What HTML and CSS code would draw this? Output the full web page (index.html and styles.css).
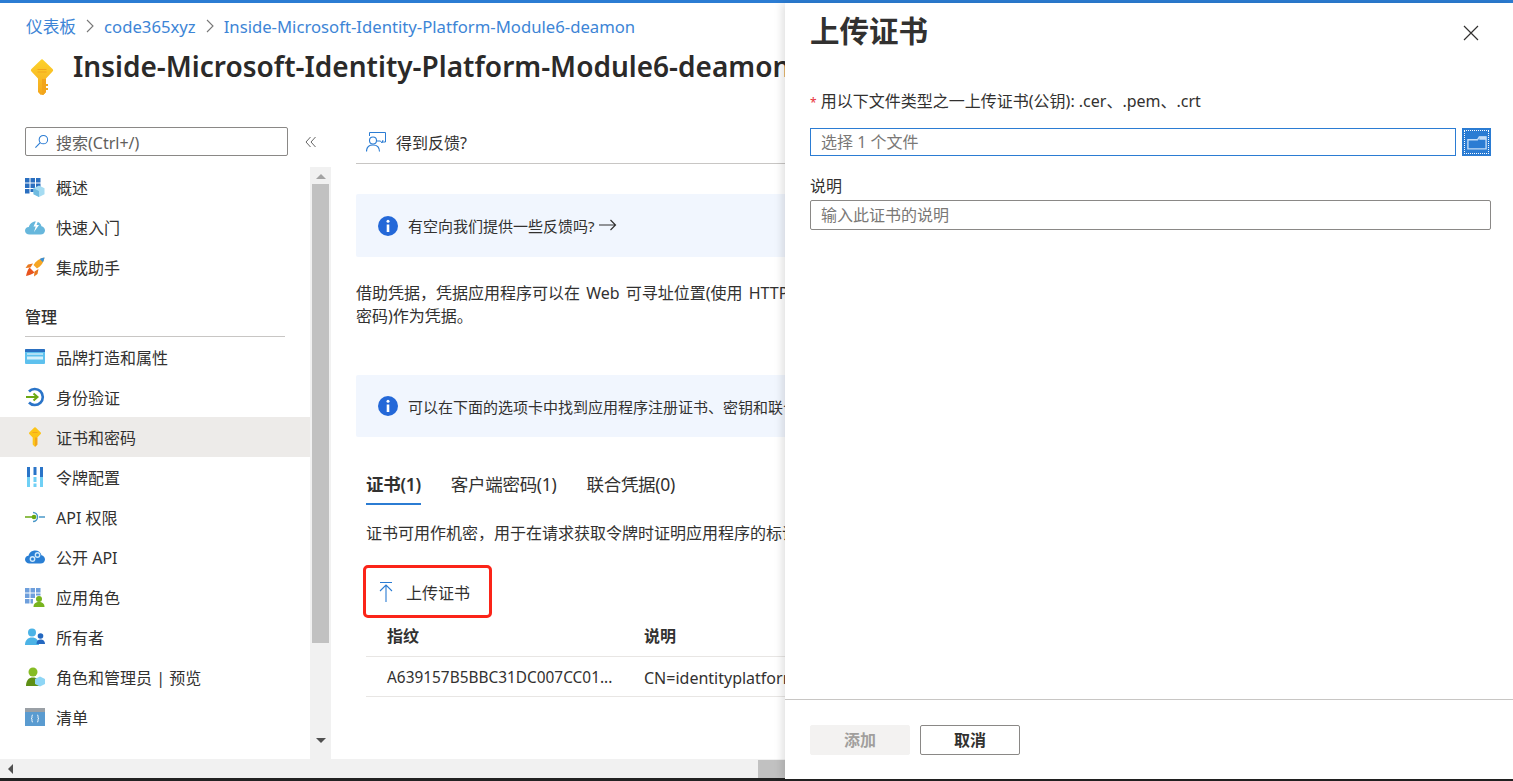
FILE: index.html
```html
<!DOCTYPE html>
<html lang="zh-CN">

<head>
    <meta charset="utf-8">
    <title>证书和密码</title>
    <link rel="stylesheet" href="styles.css">
</head>

<body>
    <div class="page">
        <div class="topBar"></div>

        <header class="header">
            <nav class="crumbs">
                <a>仪表板</a>
                <svg class="crumbSep" viewBox="0 0 10 16"><path d="M2 2l6 6-6 6" fill="none" stroke="#777" stroke-width="1.1"/></svg>
                <a>code365xyz</a>
                <svg class="crumbSep" viewBox="0 0 10 16"><path d="M2 2l6 6-6 6" fill="none" stroke="#777" stroke-width="1.1"/></svg>
                <a>Inside-Microsoft-Identity-Platform-Module6-deamon</a>
            </nav>
            <div class="titleRow">
                <svg class="titleIcon" viewBox="0 0 24 36">
                    <defs>
                        <linearGradient id="keyGold" x1="0" y1="0" x2="0" y2="1">
                            <stop offset="0" stop-color="#fdd22b"/>
                            <stop offset="1" stop-color="#f4a71d"/>
                        </linearGradient>
                    </defs>
                    <path d="M10.500 1.200a2 2 0 0 1 3 0l8.800 8.600a2 2 0 0 1 0 3L16 19.500V33l-2.500 2.800h-3L8 33V19.500L1.700 12.800a2 2 0 0 1 0-3z" fill="url(#keyGold)"/>
                    <path d="M12 20h4v13l-2.500 2.800H12z" fill="#f2a51c"/>
                    <path d="M16 25h2v2h-2zM16 29h2v2h-2z" fill="#f2a51c"/>
                    <path d="M7.500 10h9v1h-9zM7.500 12.500h9v1h-9z" fill="#f2a51c"/>
                </svg>
                <h1 class="title">Inside-Microsoft-Identity-Platform-Module6-deamon</h1>
            </div>
        </header>

        <div class="content">
            <aside class="side">
                <div class="searchRow">
                    <div class="searchBox">
                        <svg class="searchIcon" viewBox="0 0 16 16"><circle cx="10" cy="6" r="4.500" fill="none" stroke="#2b7cd3" stroke-width="1.100"/><path d="M6.700 9.300L1.500 14.500" stroke="#2b7cd3" stroke-width="1.200"/></svg>
                        <span>搜索(Ctrl+/)</span>
                    </div>
                    <svg class="collapseIcon" viewBox="0 0 12 12"><path d="M5.500 1L1 6l4.500 5M10.500 1L6 6l4.500 5" fill="none" stroke="#666" stroke-width="1"/></svg>
                </div>
                <div class="sideBody">
                    <div class="nav">
                        <a class="navItem">
                            <svg class="navIcon" viewBox="0 0 20 20">
                                <path d="M0 1h4.500v4.500H0zM5.500 1H10v4.500H5.500zM11 1h4.500v4.500H11zM0 6.500h4.500V11H0zM5.500 6.500H10V11H5.500zM11 6.500h4.500V11H11zM0 12h4.500v4.500H0zM5.500 12H10v3H5.500z" fill="#2a6fc0"/>
                                <path d="M14 8.500l5.500 2.800v6L14 20l-5.500-2.700v-6z" fill="#a6dcf2"/>
                                <path d="M14 14v6l-5.500-2.700v-6z" fill="#6fbbe0"/>
                            </svg>
                            <span>概述</span>
                        </a>
                        <a class="navItem">
                            <svg class="navIcon" viewBox="0 0 20 20">
                                <path d="M4.500 17.500C2 17.500 0 15.800 0 13.700 0 11.600 1.700 10 3.800 10 4.500 7 7.200 4.500 10.500 4.500c3 0 5.400 2 6 4.800 2 .4 3.500 2 3.500 4.100 0 2.300-2 4.100-4.400 4.100z" fill="#67b7dc"/>
                                <path d="M11.500 3L8.500 9.500h2.200L9 15l5-7h-2.500L13.500 3z" fill="#fff"/>
                            </svg>
                            <span>快速入门</span>
                        </a>
                        <a class="navItem">
                            <svg class="navIcon" viewBox="0 0 20 20">
                                <path d="M19.500.5c-5 .8-8.500 3.300-11 7.500l3.500 3.500c4.200-2.500 6.700-6 7.500-11z" fill="#f6a623"/>
                                <path d="M19.500.5c-1.800.3-3.400.8-4.800 1.600l3.200 3.200c.8-1.400 1.300-3 1.600-4.800z" fill="#3a8fd6"/>
                                <path d="M8 6.500L3 7.500.5 11l5-.5zM13.500 12l-1 5-3.500 2.500.5-5z" fill="#e8781e"/>
                                <path d="M4.500 10.500C2.500 13 1.500 16.500 1 19c2.500-.5 6-1.500 8.500-3.500z" fill="#e8541e"/>
                            </svg>
                            <span>集成助手</span>
                        </a>

                        <div class="navSection">管理</div>

                        <a class="navItem">
                            <svg class="navIcon" viewBox="0 0 20 20">
                                <path d="M1 2h18a1 1 0 0 1 1 1v13a1 1 0 0 1-1 1H1a1 1 0 0 1-1-1V3a1 1 0 0 1 1-1z" fill="#5ec1ee"/>
                                <path d="M1 2h18a1 1 0 0 1 1 1v2H0V3a1 1 0 0 1 1-1z" fill="#2a6fc0"/>
                                <path d="M2 6.500h16v1H2z" fill="#fff"/>
                                <path d="M2 9.500h16v3H2z" fill="#d5f0fb"/>
                            </svg>
                            <span>品牌打造和属性</span>
                        </a>
                        <a class="navItem">
                            <svg class="navIcon" viewBox="0 0 20 20">
                                <path d="M4 4.500A8 8 0 1 1 4 15.500" fill="none" stroke="#2a74c8" stroke-width="2.600"/>
                                <path d="M1 10h11M8.500 6.500L12.500 10 8.500 13.500" fill="none" stroke="#6aa812" stroke-width="2"/>
                            </svg>
                            <span>身份验证</span>
                        </a>
                        <a class="navItem navItemActive">
                            <svg class="navIcon" viewBox="0 0 20 20">
                                <path d="M9.300.5a1 1 0 0 1 1.400 0l5 5a1 1 0 0 1 0 1.400L12.300 10.500V17.500L10.500 19.500h-1L7.700 17.500V10.500L4.300 6.900a1 1 0 0 1 0-1.400z" fill="#fcc419"/>
                                <path d="M10 10.500h2.300v7l-1.800 2H10z" fill="#f2a51c"/>
                                <path d="M7.500 5h5v1h-5z" fill="#f2a51c"/>
                            </svg>
                            <span>证书和密码</span>
                        </a>
                        <a class="navItem">
                            <svg class="navIcon" viewBox="0 0 20 20">
                                <path d="M2 0h3v10H2zM8.500 0h3v8h-3zM15 0h3v10h-3z" fill="#2a74c8"/>
                                <path d="M2 10h3v10H2zM15 10h3v10h-3zM8.500 10h3v5h-3zM8.500 16.500h3V20h-3z" fill="#6fd0f5"/>
                            </svg>
                            <span>令牌配置</span>
                        </a>
                        <a class="navItem">
                            <svg class="navIcon" viewBox="0 0 20 20">
                                <path d="M8 5.500a4.500 4.500 0 1 1 0 9" fill="none" stroke="#4a98c8" stroke-width="1.500"/>
                                <path d="M14 10h6" stroke="#4a98c8" stroke-width="1.500"/>
                                <path d="M0 10h8" stroke="#6aa812" stroke-width="1.500"/>
                                <circle cx="9" cy="10" r="2.300" fill="#6aa812"/>
                            </svg>
                            <span>API 权限</span>
                        </a>
                        <a class="navItem">
                            <svg class="navIcon" viewBox="0 0 20 20">
                                <path d="M4.500 16.500C2 16.500 0 14.800 0 12.500 0 10.400 1.700 8.800 3.500 8.800 4 5.700 6.800 3.500 10.300 3.500c3 0 5.500 2 6.200 4.800 2 .4 3.500 2 3.500 4.100 0 2.300-2 4.100-4.400 4.100z" fill="#2a7fd4"/>
                                <circle cx="7.500" cy="12" r="2.200" fill="none" stroke="#cfe8fa" stroke-width="1.400"/>
                                <circle cx="12.500" cy="8" r="2.200" fill="none" stroke="#cfe8fa" stroke-width="1.400"/>
                            </svg>
                            <span>公开 API</span>
                        </a>
                        <a class="navItem">
                            <svg class="navIcon" viewBox="0 0 20 20">
                                <path d="M0 1h4.500v4.500H0zM5.500 1H10v4.500H5.500zM11 1h4.500v4.500H11zM0 6.500h4.500V11H0zM5.500 6.500H10V11H5.500zM11 6.500h4.500v2H11zM0 12h4.500v4.500H0zM5.500 12H8v4.500H5.500z" fill="#6e9fdc"/>
                                <circle cx="14" cy="12" r="3" fill="#78b41e"/>
                                <path d="M8.500 20c0-3.300 2.200-5 5.500-5s5.500 1.700 5.500 5z" fill="#78b41e"/>
                            </svg>
                            <span>应用角色</span>
                        </a>
                        <a class="navItem">
                            <svg class="navIcon" viewBox="0 0 20 20">
                                <circle cx="7" cy="5.500" r="4" fill="#4cb3e6"/>
                                <path d="M0 18c0-5 3-7.500 7-7.500s7 2.500 7 7.500z" fill="#4cb3e6"/>
                                <circle cx="15.500" cy="9" r="2.800" fill="#2468c0"/>
                                <path d="M11.500 17c0-3.200 1.700-4.500 4-4.500s4.500 1.300 4.500 4.500z" fill="#2468c0"/>
                            </svg>
                            <span>所有者</span>
                        </a>
                        <a class="navItem">
                            <svg class="navIcon" viewBox="0 0 20 20">
                                <circle cx="8" cy="5" r="4.500" fill="#86bc25"/>
                                <path d="M1 19c0-6 3-8.500 7-8.500s7 2.500 7 8.500z" fill="#5e8f15"/>
                                <path d="M15 9.500l5 2.500v5l-5 2.500-5-2.500v-5z" fill="#8fd6f5"/>
                            </svg>
                            <span>角色和管理员 | 预览</span>
                        </a>
                        <a class="navItem">
                            <svg class="navIcon" viewBox="0 0 20 20">
                                <path d="M0 1h20v18H0z" fill="#5a9bd0"/>
                                <path d="M0 1h20v4H0z" fill="#9aa0a6"/>
                                <path d="M8 8c-1.500 0-1 1.500-1 2.500 0 .7-.5 1-1 1 .5 0 1 .3 1 1 0 1-.5 2.500 1 2.500M12 8c1.500 0 1 1.500 1 2.500 0 .7.5 1 1 1-.5 0-1 .3-1 1 0 1 .5 2.500-1 2.500" fill="none" stroke="#fff" stroke-width=".9"/>
                            </svg>
                            <span>清单</span>
                        </a>
                    </div>
                    <div class="vScroll">
                        <div class="arrowUp"></div>
                        <div class="vThumb"></div>
                        <div class="arrowDown"></div>
                    </div>
                </div>
            </aside>

            <main class="main">
                <div class="toolbar">
                    <svg class="toolIcon" viewBox="0 0 20 20">
                        <path d="M3.500 4V.5h16v9.500h-3" fill="none" stroke="#2b7cd3" stroke-width="1"/>
                        <circle cx="7" cy="8.500" r="3.500" fill="none" stroke="#2b7cd3" stroke-width="1.100"/>
                        <path d="M.5 19.500c0-4.500 2.500-6.500 6.500-6.500s6.500 2 6.500 6.500" fill="none" stroke="#2b7cd3" stroke-width="1.100"/>
                        <path d="M11 9h3.500l1.500 2 1-3" fill="none" stroke="#2b7cd3" stroke-width="1"/>
                    </svg>
                    <span>得到反馈?</span>
                </div>

                <div class="infoBar infoFirst">
                    <svg class="infoIcon" viewBox="0 0 20 20"><circle cx="10" cy="10" r="10" fill="#2468d8"/><circle cx="10" cy="5.300" r="1.500" fill="#fff"/><path d="M8.700 8.500h2.600v7.500H8.700z" fill="#fff"/></svg>
                    <span>有空向我们提供一些反馈吗?</span>
                    <svg class="arrowIcon" viewBox="0 0 18 12"><path d="M0 6h16.500M11.500 1l5 5-5 5" fill="none" stroke="#323130" stroke-width="1.200"/></svg>
                </div>

                <p class="intro">借助凭据，凭据应用程序可以在 Web 可寻址位置(使用 HTTPS 方案)接收令牌时向身份验证服务标识自身。为了提高保证级别，我们建议使用证书(而不是客户端<br>密码)作为凭据。</p>

                <div class="infoBar">
                    <svg class="infoIcon" viewBox="0 0 20 20"><circle cx="10" cy="10" r="10" fill="#2468d8"/><circle cx="10" cy="5.300" r="1.500" fill="#fff"/><path d="M8.700 8.500h2.600v7.500H8.700z" fill="#fff"/></svg>
                    <span>可以在下面的选项卡中找到应用程序注册证书、密钥和联合凭据的详细信息。</span>
                </div>

                <div class="tabs">
                    <a class="tab tabActive">证书(1)</a>
                    <a class="tab">客户端密码(1)</a>
                    <a class="tab">联合凭据(0)</a>
                </div>

                <p class="tabNote">证书可用作机密，用于在请求获取令牌时证明应用程序的标识。也可以称为公钥。</p>

                <button class="uploadButton">
                    <svg class="uploadIcon" viewBox="0 0 14 20"><path d="M1 .5h12M7 20V3M1 9l6-6 6 6" fill="none" stroke="#2b7cd3" stroke-width="1.100"/></svg>
                    <span>上传证书</span>
                </button>

                <table class="certTable">
                    <tr>
                        <th class="colThumb">指纹</th>
                        <th>说明</th>
                    </tr>
                    <tr>
                        <td class="colThumb thumbValue">A639157B5BBC31DC007CC01...</td>
                        <td>CN=identityplatform</td>
                    </tr>
                </table>
            </main>
        </div>

        <div class="hScroll">
            <div class="arrowLeft"></div>
            <div class="hThumb"></div>
        </div>
        <div class="bottomStrip"></div>

        <section class="panel">
            <div class="panelHead">
                <h2 class="panelTitle">上传证书</h2>
                <svg class="closeIcon" viewBox="0 0 16 16"><path d="M1 1l14 14M15 1L1 15" stroke="#323130" stroke-width="1.200"/></svg>
            </div>
            <div class="panelBody">
                <div class="fieldLabel fileLabel"><span class="star">*</span> 用以下文件类型之一上传证书(公钥): .cer、.pem、.crt</div>
                <div class="fileRow">
                    <input class="textInput fileInput" type="text" placeholder="选择 1 个文件">
                    <button class="folderButton">
                        <svg viewBox="0 0 22 16" class="folderIcon"><path d="M1 5h10.500l2-3H21v13H1z" fill="none" stroke="#c4dcf6" stroke-width="1.500"/><path d="M13.500 1.500H21V5h-7.500z" fill="#c4dcf6"/></svg>
                    </button>
                </div>
                <div class="fieldLabel descLabel">说明</div>
                <input class="textInput" type="text" placeholder="输入此证书的说明">
            </div>
            <div class="panelFoot">
                <button class="btn btnDisabled">添加</button>
                <button class="btn">取消</button>
            </div>
        </section>
    </div>
</body>

</html>
```

FILE: styles.css
```css
* {
    box-sizing: border-box;
}

html, body {
    margin: 0;
    padding: 0;
    height: 100%;
    overflow: hidden;
}

body {
    font-family: "Noto Sans", "Noto Sans CJK SC", sans-serif;
    font-size: 16px;
    color: #323130;
    background-color: #fff;
}

.page {
    position: relative;
    height: 100%;
    display: flex;
    flex-direction: column;
    overflow: hidden;
}

.topBar {
    height: 3px;
    flex: none;
    background-color: #2b7cd3;
}

.header {
    height: 124px;
    flex: none;
    padding-left: 26px;
    white-space: nowrap;
    overflow: hidden;
}

.crumbs {
    display: flex;
    align-items: center;
    gap: 9px;
    height: 46px;
    font-size: 16.7px;
    color: #3d85d6;
}

.crumbSep {
    width: 10px;
    height: 16px;
}

.titleRow {
    display: flex;
    height: 50px;
    margin-top: -1px;
}

.titleIcon {
    width: 24px;
    height: 36px;
    margin: 11px 19px 0 4px;
    flex: none;
}

.title {
    margin: 0;
    font-size: 28px;
    line-height: 36px;
    font-weight: 600;
    color: #2b2a29;
}

.content {
    flex: 1;
    min-height: 0;
    display: flex;
}

.side {
    width: 331px;
    flex: none;
    display: flex;
    flex-direction: column;
}

.searchRow {
    height: 40px;
    flex: none;
    display: flex;
    padding-left: 25px;
}

.searchBox {
    width: 263px;
    height: 29px;
    display: flex;
    align-items: center;
    gap: 7px;
    padding-left: 8px;
    border: 1px solid #8a8886;
    border-radius: 2px;
    color: #605e5c;
}

.searchIcon {
    width: 15px;
    height: 15px;
}

.collapseIcon {
    width: 12px;
    height: 12px;
    margin: 9px 0 0 17px;
}

.sideBody {
    flex: 1;
    min-height: 0;
    display: flex;
}

.nav {
    width: 310px;
    flex: none;
}

.navItem {
    display: flex;
    align-items: center;
    gap: 11px;
    height: 40px;
    padding: 0 0 1px 25px;
}

.navItemActive {
    background-color: #edebe9;
}

.navIcon {
    width: 20px;
    height: 20px;
    flex: none;
}

.navSection {
    height: 50px;
    margin: 0 25px;
    padding-top: 17px;
    border-bottom: 1px solid #c8c6c4;
    font-weight: 500;
}

.vScroll {
    width: 21px;
    flex: none;
    padding: 0 2px;
    display: flex;
    flex-direction: column;
    align-items: center;
    background-color: #f1f1f1;
}

.vThumb {
    width: 17px;
    height: 459px;
    margin-top: 5px;
    background-color: #c1c1c1;
}

.arrowUp {
    width: 0;
    height: 0;
    margin-top: 7px;
    border: 5px solid transparent;
    border-top: 0;
    border-bottom-color: #a3a3a3;
}

.arrowDown {
    width: 0;
    height: 0;
    margin-top: 95px;
    border: 5px solid transparent;
    border-bottom: 0;
    border-top-color: #505050;
}

.main {
    flex: 1;
    min-width: 0;
    padding-left: 25px;
    white-space: nowrap;
    overflow: hidden;
}

.toolbar {
    height: 37px;
    display: flex;
    align-items: center;
    gap: 10px;
    padding: 0 0 7px 10px;
    border-bottom: 1px solid #c8c6c4;
}

.toolIcon {
    width: 20px;
    height: 20px;
}

.infoBar {
    height: 62px;
    display: flex;
    align-items: center;
    gap: 10px;
    padding-left: 22px;
    border-radius: 2px;
    background-color: #f1f6fe;
    font-size: 15px;
}

.infoFirst {
    height: 63px;
    margin-top: 30px;
}

.infoIcon {
    width: 20px;
    height: 20px;
    flex: none;
}

.arrowIcon {
    width: 18px;
    height: 12px;
    margin: -2px 0 0 -6px;
}

.intro {
    height: 118px;
    margin: 0;
    padding-top: 25px;
    line-height: 23px;
    word-spacing: 2px;
}

.tabs {
    display: flex;
    gap: 30px;
    height: 40px;
    margin: 28px 0 0 10px;
    font-size: 17.5px;
    line-height: 38px;
    letter-spacing: -0.3px;
}

.tab {
    height: 40px;
}

.tabActive {
    border-bottom: 2px solid #2b7cd3;
    font-weight: 600;
}

.tabNote {
    margin: 17px 0 0 10px;
    line-height: 22px;
}

.uploadButton {
    display: flex;
    align-items: center;
    width: 129px;
    height: 53px;
    margin: 21px 0 0 7px;
    padding: 0 0 0 13px;
    gap: 13px;
    border: 3px solid #fb2418;
    border-radius: 5px;
    background: none;
    font: inherit;
    color: inherit;
}

.uploadIcon {
    width: 14px;
    height: 20px;
}

.certTable {
    width: 100%;
    margin-left: 10px;
    border-collapse: collapse;
}

.certTable th,
.certTable td {
    padding: 0;
    text-align: left;
    border-bottom: 1px solid #e8e6e4;
}

.certTable th {
    height: 38px;
    padding-bottom: 4px;
    font-weight: 600;
}

.certTable td {
    height: 40px;
    padding-top: 3px;
}

.colThumb {
    width: 278px;
    padding-left: 21px !important;
}

.thumbValue {
    font-size: 15.4px;
}

.hScroll {
    height: 19px;
    flex: none;
    display: flex;
    align-items: center;
    background-color: #f1f1f1;
}

.arrowLeft {
    width: 0;
    height: 0;
    margin-left: 8px;
    border: 5px solid transparent;
    border-left: 0;
    border-right-color: #505050;
}

.hThumb {
    width: 27px;
    height: 18px;
    margin-left: 745px;
    background-color: #c1c1c1;
}

.bottomStrip {
    height: 3px;
    flex: none;
    background-color: #222;
}

.panel {
    position: absolute;
    top: 3px;
    right: 0;
    bottom: 2px;
    width: 728px;
    display: flex;
    flex-direction: column;
    background-color: #fff;
    box-shadow: -3px 0 8px rgba(0, 0, 0, 0.12);
}

.panelHead {
    height: 56px;
    flex: none;
    display: flex;
    justify-content: space-between;
    padding: 6px 34px 0 25px;
}

.panelTitle {
    margin: 0;
    font-size: 29.500px;
    line-height: 44px;
    font-weight: 700;
}

.closeIcon {
    width: 16px;
    height: 16px;
    margin-top: 16px;
}

.panelBody {
    flex: 1;
    min-height: 0;
    padding: 30px 22px 0 25px;
}

.fieldLabel {
    line-height: 24px;
}

.fileLabel {
    height: 39px;
}

.star {
    font-size: 12px;
    color: #e8313a;
}

.fileRow {
    display: flex;
    gap: 6px;
}

.textInput {
    display: block;
    width: 100%;
    height: 30px;
    padding: 0 10px;
    border: 1px solid #8a8886;
    border-radius: 2px;
    font: inherit;
    color: inherit;
    outline: none;
}

.textInput::placeholder {
    color: #7a7876;
    opacity: 1;
}

.fileInput {
    height: 28px;
    border-color: #2b7cd3;
    border-radius: 0;
}

.folderButton {
    width: 29px;
    height: 28px;
    flex: none;
    padding: 0;
    border: 0;
    background-color: #2b7cd3;
    outline: 1px dotted #fff;
    outline-offset: -3px;
}

.folderIcon {
    display: block;
    width: 20px;
    height: 15px;
    margin: 0 auto;
}

.descLabel {
    margin-top: 18px;
    height: 26px;
}

.panelFoot {
    height: 80px;
    flex: none;
    display: flex;
    gap: 10px;
    padding: 25px 0 0 25px;
    border-top: 1px solid #c8c6c4;
}

.btn {
    width: 100px;
    height: 30px;
    padding: 0 0 3px;
    border: 1px solid #8a8886;
    border-radius: 2px;
    background-color: #fff;
    font: inherit;
    font-weight: 600;
    color: #323130;
}

.btnDisabled {
    border-color: #f3f2f1;
    background-color: #f3f2f1;
    color: #a19f9d;
}
```
